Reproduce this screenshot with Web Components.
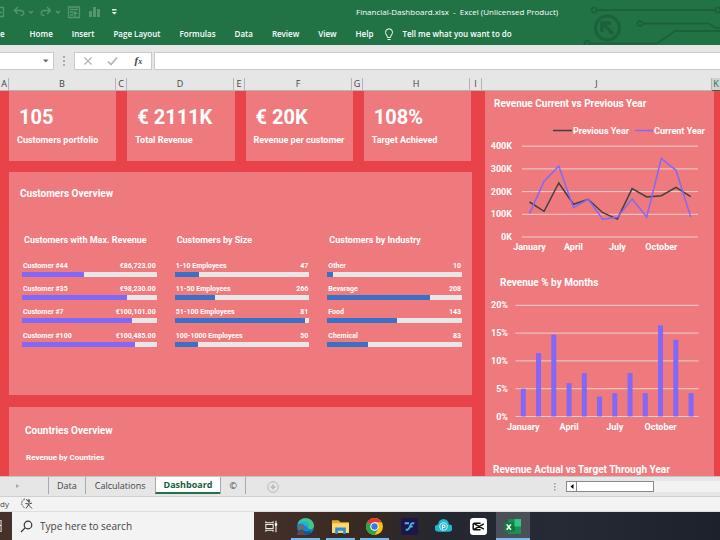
<!DOCTYPE html>
<html lang="en">
<head>
<meta charset="utf-8">
<meta name="viewport" content="width=device-width, initial-scale=1">
<title>Financial-Dashboard.xlsx - Excel</title>
<style>
  :root {
    --ui: "Open Sans", "Noto Sans", sans-serif;
    --dash: Roboto, "Liberation Sans", sans-serif;
    --green: #217346;
    --chrome: #e6e6e6;
    --red: #e84348;
    --pink: #ef7a7d;
    --violet: #8168f8;
    --blue: #3a70c6;
  }
  html, body { height: 100%; margin: 0; }
  body { display: flex; flex-direction: column; overflow: hidden; background: var(--chrome); font-family: var(--ui); }
</style>
</head>
<body>
<excel-header></excel-header>
<formula-bar></formula-bar>
<column-heads></column-heads>
<work-sheet>
  <kpi-card slot="kpi" value="105">Customers portfolio</kpi-card>
  <kpi-card slot="kpi" value="€ 2111K">Total Revenue</kpi-card>
  <kpi-card slot="kpi" value="€ 20K">Revenue per customer</kpi-card>
  <kpi-card slot="kpi" value="108%">Target Achieved</kpi-card>
  <meter-list slot="meters" heading="Customers with Max. Revenue" color="var(--violet)"
    rows="Customer #44|€86,723.00|46;Customer #35|€98,230.00|78;Customer #7|€100,101.00|82;Customer #100|€100,485.00|84"></meter-list>
  <meter-list slot="meters" heading="Customers by Size" color="var(--blue)"
    rows="1-10 Employees|47|18;11-50 Employees|266|30;51-100 Employees|81|97;100-1000 Employees|50|17"></meter-list>
  <meter-list slot="meters" heading="Customers by Industry" color="var(--blue)"
    rows="Other|10|4;Bevarage|208|76;Food|143|52;Chemical|83|30"></meter-list>
  <line-chart slot="line"></line-chart>
  <bar-chart slot="bars"></bar-chart>
</work-sheet>
<sheet-tabs></sheet-tabs>
<status-bar></status-bar>
<task-bar></task-bar>

<script>
const define = (name, html, setup) => customElements.define(name, class extends HTMLElement {
  constructor() {
    super();
    this.attachShadow({ mode: "open" });
  }
  connectedCallback() {
    this.shadowRoot.innerHTML = "<style>:host,*{box-sizing:border-box}button{font:inherit;color:inherit;background:none;border:0;padding:0;margin:0}svg{display:block}</style>" + html;
    if (setup) setup(this, this.shadowRoot);
  }
});

define("excel-header", `
<style>
  :host { display: block; position: relative; flex: none; background: var(--green); color: #fff; font-size: 8px; line-height: 12px; font-weight: 600; }
  .deco { position: absolute; right: 0; top: 0; }
  .title { display: flex; align-items: center; height: 24px; position: relative; font-weight: 500; }
  .quick { width: 356px; }
  .quick svg { width: 120px; height: 24px; }
  .title span { white-space: pre; }
  nav { display: flex; align-items: center; gap: 19px; height: 21px; padding-bottom: 1px; position: relative; }
  nav button { white-space: nowrap; }
  .file { margin-right: 6px; }
  .tell { display: flex; align-items: center; gap: 8px; margin-left: -8px; }
</style>
<svg class="deco" width="140" height="45" viewBox="580 0 140 45" fill="none" stroke="#1c613a" stroke-width="2" aria-hidden="true">
  <circle cx="607.500" cy="28" r="12" stroke-width="3"/>
  <path d="M613 34L603 24M602 32V23H611" stroke-width="3.500"/>
  <circle cx="594" cy="10" r="2.500"/><path d="M597 10H715"/><circle cx="718" cy="10" r="2.500"/>
  <circle cx="640" cy="23.500" r="2.500"/><path d="M643 23.500H708L716 28H720"/>
  <circle cx="587" cy="43.500" r="2.500"/><path d="M590 43.500H657L675 31H720"/>
</svg>
<div class="title">
  <div class="quick">
    <svg viewBox="0 0 120 24" fill="none" stroke="#55966f" stroke-width="1.300" aria-hidden="true">
      <path d="M0 7.500H3.500V16.500H0M0 12.500H2"/>
      <path d="M18 7L14.500 10.500L18 14M15 10.500H20C25 10.500 25 15.500 20.500 15.500"/>
      <path d="M29 11L31 13L33 11"/>
      <path d="M47 7L50.500 10.500L47 14M50 10.500H45C40 10.500 40 15.500 44.500 15.500"/>
      <path d="M56 11L58 13L60 11"/>
      <path d="M68.500 7H79.500V17.500H68.500ZM70 9.500H78M70 12H73M70 15H73M75 17V12L73 14M75 12L77.500 14"/>
      <g fill="#55966f" stroke="none"><rect x="89" y="11" width="3" height="6"/><rect x="93" y="7" width="3" height="10"/><rect x="97" y="9" width="3" height="8"/></g>
      <path d="M112 9.800H116.500" stroke="#fff"/><path d="M111.800 12H116.800L114.300 14.500Z" fill="#fff" stroke="none"/>
    </svg>
  </div>
  <span>Financial-Dashboard.xlsx  -  Excel (Unlicensed Product)</span>
</div>
<nav>
  <button class="file" aria-label="File">e</button><button>Home</button><button>Insert</button><button>Page Layout</button><button>Formulas</button><button>Data</button><button>Review</button><button>View</button><button>Help</button>
  <button class="tell"><svg width="10" height="13" viewBox="0 0 10 13" fill="none" stroke="#fff" aria-hidden="true"><path d="M3.500 9.500C3.500 7.500 1.500 6.500 1.500 4.300A3.500 3.500 0 0 1 8.500 4.300C8.500 6.500 6.500 7.500 6.500 9.500ZM3.500 11.500H6.500"/></svg>Tell me what you want to do</button>
</nav>`);

define("formula-bar", `
<style>
  :host { display: flex; flex: none; height: 33px; padding: 7px 0 8px; background: var(--chrome); }
  label { display: flex; background: #fff; border: 1px solid #cacaca; border-left: 0; width: 54px; align-items: center; }
  input { width: 100%; min-width: 0; border: 0; padding: 0 4px; background: none; font: 9px var(--ui); outline: 0; }
  .name svg { flex: none; width: 14px; height: 8px; }
  .grip { width: 20px; display: grid; place-items: center; }
  .fx { display: flex; width: 78px; background: #fff; border: 1px solid #cacaca; margin-right: 2px; }
  .fx button { flex: 1; display: flex; align-items: center; justify-content: center; }
  .fx .f { font: italic 700 11px/14px "Liberation Serif", serif; color: #444; }
  .fx .f i { font-size: 8px; }
  .formula { flex: 1; border: 1px solid #cacaca; border-right: 0; }
</style>
<label class="name"><input aria-label="Name box"><svg viewBox="0 0 14 8" aria-hidden="true"><path d="M4 2.500H9.500L6.750 5.500Z" fill="#666"/></svg></label>
<div class="grip"><svg width="2" height="10" viewBox="0 0 2 10" fill="#aaa" aria-hidden="true"><path d="M0 0H2V2H0ZM0 4H2V6H0ZM0 8H2V10H0Z"/></svg></div>
<div class="fx">
  <button aria-label="Cancel"><svg width="10" height="10" viewBox="0 0 10 10" stroke="#b5b5b5" stroke-width="1.300"><path d="M1.500 1.500L8.500 8.500M8.500 1.500L1.500 8.500"/></svg></button>
  <button aria-label="Enter"><svg width="11" height="10" viewBox="0 0 11 10" fill="none" stroke="#b5b5b5" stroke-width="1.700"><path d="M1 5.500L4 8.500L10 1.500"/></svg></button>
  <button class="f" aria-label="Insert function"><span>f<i>x</i></span></button>
</div>
<label class="formula"><input aria-label="Formula"></label>`);

define("column-heads", `
<style>
  :host { display: grid; grid-template-columns: 9px 107fr 11px 107fr 11px 107fr 11px 107fr 12px 230fr 8px; flex: none; height: 13px; background: var(--chrome); border-bottom: 1px solid #b4b4b4; color: #444; font: 9px/12px var(--ui); }
  span { border-right: 1px solid #b4b4b4; text-align: center; }
  span:first-child { text-align: left; }
  span:last-child { border: 0; background: #d2d2d2; color: var(--green); box-shadow: 0 1px var(--green); }
</style>` + [..."ABCDEFGHIJK"].map(c => `<span>${c}</span>`).join(""));

define("work-sheet", `
<style>
  :host { display: grid; grid-template-columns: 463fr 229fr; gap: 13px; flex: 1; min-height: 0; overflow: hidden; padding: 0 6px 0 9px; background: var(--red); color: #fff; font-family: var(--dash); font-weight: 700; }
  .left { display: flex; flex-direction: column; min-width: 0; }
  .kpis { display: grid; grid-template-columns: repeat(4, 1fr); gap: 11px; padding-right: 1px; margin-bottom: 11px; height: 70px; flex: none; }
  section { background: var(--pink); }
  h2 { margin: 0; font-size: 10px; line-height: 14px; }
  h3 { margin: 0; font-size: 8px; line-height: 12px; }
  .customers { height: 223px; flex: none; padding: 15px 10px 0 11px; margin-bottom: 12px; }
  .meters { display: grid; grid-template-columns: repeat(3, 1fr); gap: 18px; margin-top: 33px; padding-left: 2px; }
  .countries { flex: 1; padding: 17px 16px 0; }
  .countries h3 { margin: 14px 0 0 1px; }
  .right { min-width: 0; padding-top: 6px; }
  .right h2 { padding-left: 9px; white-space: nowrap; }
  .right line-chart, .right slot { display: block; }
  .right slot[name="line"] { margin-top: -1px; }
  .right .months { padding-left: 15px; margin-top: 19px; }
  .right slot[name="bars"] { margin-top: -1px; }
  .right .actual { margin-top: 28px; padding-left: 8px; line-height: 12px; }
</style>
<div class="left">
  <div class="kpis"><slot name="kpi"></slot></div>
  <section class="customers"><h2>Customers Overview</h2><div class="meters"><slot name="meters"></slot></div></section>
  <section class="countries"><h2>Countries Overview</h2><h3>Revenue by Countries</h3></section>
</div>
<section class="right">
  <h2>Revenue Current vs Previous Year</h2>
  <slot name="line"></slot>
  <h2 class="months">Revenue % by Months</h2>
  <slot name="bars"></slot>
  <h2 class="actual">Revenue Actual vs Target Through Year</h2>
</section>`);

define("kpi-card", `
<style>
  :host { display: block; background: var(--pink); padding: 13px 0 0 8px; min-width: 0; white-space: nowrap; }
  strong { display: block; padding-left: 2px; font: 700 20px/26px var(--dash); }
  span { display: block; margin-top: 4px; font-size: 9px; line-height: 12px; }
</style>
<strong></strong><span><slot></slot></span>`, (el, root) => {
  root.querySelector("strong").textContent = el.getAttribute("value");
});

define("meter-list", `
<style>
  :host { display: block; min-width: 0; }
  h3 { margin: 0 0 16px; padding-left: 2px; font-size: 9px; line-height: 12px; white-space: nowrap; }
  .row { padding-bottom: 8px; }
  .row:nth-of-type(3) { padding-bottom: 9px; }
  .text { display: flex; justify-content: space-between; padding: 0 1px; font-size: 7px; line-height: 9px; margin-bottom: 1px; }
  .track { height: 5px; background: #e8e6e6; }
  .fill { height: 5px; }
</style><h3></h3>`, (el, root) => {
  root.querySelector("h3").textContent = el.getAttribute("heading");
  for (const item of el.getAttribute("rows").split(";")) {
    const [label, value, pct] = item.split("|");
    root.innerHTML += `<div class="row"><div class="text"><span>${label}</span><span>${value}</span></div><div class="track"><div class="fill" style="width:${pct}%;background:${el.getAttribute("color")}"></div></div></div>`;
  }
});

const text = (x, y, s, anchor) => `<text x="${x}" y="${y}" text-anchor="${anchor}">${s}</text>`;
const chartStyle = `<style>:host{display:block} svg{width:100%;height:auto} text{font:700 9px var(--dash);fill:#fff}</style>`;

define("line-chart", chartStyle, (el, root) => {
  const prev = [154, 113, 238, 144, 166, 107, 79, 213, 176, 182, 219, 178];
  const cur = [103, 246, 312, 129, 166, 78, 87, 168, 88, 346, 294, 88];
  const px = i => 44.5 + i * 14.65, py = v => 127 - v * 0.227;
  const line = (d, c) => `<polyline points="${d.map((v, i) => px(i).toFixed(1) + "," + py(v).toFixed(1)).join(" ")}" fill="none" stroke="${c}" stroke-width="1.500"/>`;
  let g = "";
  for (let v = 0; v <= 400; v += 100) g += `<path d="M37 ${py(v)}H213" stroke="#ead2d2"/>` + text(27, py(v) + 3, v + "K", "end");
  ["January", "April", "July", "October"].forEach((m, i) => g += text(px(i * 3), 140, m, "middle"));
  root.innerHTML += `<svg viewBox="0 0 229 147" role="img" aria-label="Revenue current vs previous year">${g}
    <path d="M68 20.500H87" stroke="#404040" stroke-width="1.500"/>${text(88, 24, "Previous Year", "start")}
    <path d="M150 20.500H168" stroke="#8168f8" stroke-width="1.500"/>${text(169, 24, "Current Year", "start")}
    ${line(prev, "#404040")}${line(cur, "#8168f8")}</svg>`;
});

define("bar-chart", chartStyle, (el, root) => {
  const data = [5, 11.4, 14.7, 6, 7.8, 3.6, 4.2, 7.8, 4.2, 16.4, 13.8, 4.2];
  const px = i => 38.3 + i * 15.25, py = v => 127.5 - v * 5.56;
  let g = "";
  for (let v = 0; v <= 20; v += 5) g += `<path d="M30.500 ${py(v)}H213.500" stroke="#ead2d2"/>` + text(23, py(v) + 3, v + "%", "end");
  data.forEach((v, i) => g += `<rect x="${px(i) - 2.5}" y="${py(v)}" width="5" height="${v * 5.56}" fill="#8168f8"/>`);
  ["January", "April", "July", "October"].forEach((m, i) => g += text(px(i * 3), 141, m, "middle"));
  root.innerHTML += `<svg viewBox="0 0 229 147" role="img" aria-label="Revenue percent by months">${g}</svg>`;
});

define("sheet-tabs", `
<style>
  :host { display: flex; flex: none; height: 21px; background: var(--chrome); border-top: 1px solid #c4c4c4; border-bottom: 1px solid #cfcfcf; font-size: 9px; color: #444; }
  .arrow { width: 49px; display: grid; place-items: center; padding-right: 12px; border-right: 1px solid #aaa; }
  .tabs { display: flex; }
  .tabs > button { padding: 0 8px; }
  .tabs > button + button { border-left: 1px solid #aaa; }
  .tabs > .calc { padding: 0 9px; }
  .tabs > .on { background: #fff; color: #17603a; font-weight: 700; border-bottom: 2px solid var(--green); }
  .tabs > .copy { border-right: 1px solid #aaa; }
  .arrow, .tabs { margin-bottom: 2px; }
  .add { margin-left: 21px; }
  .scroll { display: flex; align-items: center; margin-left: auto; width: 167px; }
  .dots { width: 13px; }
  .prev { width: 11px; height: 11px; display: grid; place-items: center; background: #fff; border: 1px solid #888; }
  .track { flex: 1; height: 11px; background: #f2f2f2; }
  .thumb { width: 77px; height: 11px; background: #fff; border: 1px solid #888; border-left: 0; }
</style>
<div class="arrow"><svg width="4" height="6" viewBox="0 0 4 6"><path d="M0 1L3.500 3L0 5Z" fill="#aaa"/></svg></div>
<div class="tabs"><button>Data</button><button class="calc">Calculations</button><button class="on">Dashboard</button><button class="copy">©</button></div>
<button class="add" aria-label="New sheet"><svg width="12" height="12" viewBox="0 0 12 12" fill="none" stroke="#b8b8b8"><circle cx="6" cy="6" r="5.300"/><path d="M3.500 6H8.500M6 3.500V8.500" stroke-width="1.500"/></svg></button>
<div class="scroll"><svg class="dots" width="13" height="8" viewBox="0 0 13 8" fill="#999"><path d="M1 0H2.500V1.500H1ZM1 3H2.500V4.500H1ZM1 6H2.500V7.500H1Z"/></svg>
<button class="prev" aria-label="Scroll left"><svg width="4" height="5" viewBox="0 0 4 5"><path d="M3.500 0V5L0.500 2.500Z" fill="#000"/></svg></button><div class="track"><div class="thumb"></div></div></div>`);

define("status-bar", `
<style>
  :host { display: flex; align-items: center; gap: 12px; flex: none; height: 15px; background: #f3f3f3; color: #444; font: 8px/12px var(--ui); border-bottom: 1px solid #ddd; }
</style>
<span>dy</span>
<svg width="12" height="12" viewBox="0 0 12 12" fill="none" stroke="#444" aria-hidden="true"><path d="M4 1A4.500 4.500 0 0 0 3.500 9.500" stroke-dasharray="2 1"/><path d="M5 1.500L8 3V1M4.500 5.500L8 6L11 5M8 6L5 10.500M7.500 7L11 10.500"/><circle cx="8" cy="3.500" r="0.800"/></svg>`);

const apps = {
  "Task View": `<path d="M1 1.500V3.500H10V1.500M1 14.500V12.500H10V14.500M1 5.500H10V10.500H1ZM13.500 1V15" fill="none" stroke="#eee" stroke-width="1.300"/><rect x="12" y="4" width="3" height="3" fill="#fff"/>`,
  "Edge": `<circle cx="8" cy="8" r="8" fill="#1683cc"/><path d="M0.500 6C2-2 15-2 16 7C16 12 9 11 10 8C10 5 4 3 .5 6Z" fill="#42c885"/><path d="M1 6C5 1 11 3 12 7L8 8C6 5 3 5 1 6Z" fill="#26add8"/><path d="M5 7C3 12 9 14 14 12C11 17 4 17 2 12Z" fill="#164f96"/><circle cx="4" cy="9" r="2.300" fill="#87614c"/><path d="M0 16C0 11 7 10 7.500 16Z" fill="#624a43"/>`,
  "File Explorer": `<path d="M0 2H6L8 4H16V14H0Z" fill="#e8a928"/><path d="M0 5H16V14H0Z" fill="#ffd76b"/><path d="M3 9H13V15H10.500V12H5.500V15H3Z" fill="#288fdd"/>`,
  "Chrome": `<circle cx="8" cy="8" r="8" fill="#fbc116"/><path d="M8 8L1.100 4A8 8 0 0 1 14.900 4H8Z" fill="#e33b2e"/><path d="M8 8L1.100 4A8 8 0 0 0 8 16L11.500 10Z" fill="#2ba24c"/><circle cx="8" cy="8" r="4" fill="#fff"/><circle cx="8" cy="8" r="3" fill="#3779e4"/>`,
  "Flow": `<rect width="16" height="16" rx="1" fill="#1c1748"/><path d="M3.500 5H7.500M12.500 5H10.500C8.500 5 8.500 11 6 11H4.500M8.500 8H11" fill="none" stroke="#42b8ed" stroke-width="1.800"/>`,
  "Cloud": `<path d="M3.500 13A3.500 3.500 0 0 1 3 6A5 5 0 0 1 13 6A3.500 3.500 0 0 1 13 13Z" fill="#22b6cc"/><circle cx="8" cy="8" r="3.500" fill="none" stroke="#b9f0f8"/><path d="M7 10.500V6.500H8.300A1.200 1.200 0 0 1 8.300 8.900H7" fill="none" stroke="#fff"/>`,
  "CapCut": `<rect width="16" height="16" rx="3" fill="#fff"/><path d="M13 5.500L5 10Q3 11.500 3 10V6Q3 4.500 5 6L13 10.500M3.500 5H10M3.500 11H10" fill="none" stroke="#111" stroke-width="1.400"/>`,
  "Excel": `<path d="M4 1H16V15H4Z" fill="#1b8f54"/><path d="M10 1H16V8H10Z" fill="#35c481"/><path d="M4 8H10V12H4Z" fill="#185c37"/><rect y="4" width="9" height="9" fill="#107c41"/><path d="M2.500 6L6.500 11M6.500 6L2.500 11" stroke="#fff" stroke-width="1.400"/>`
};
define("task-bar", `
<style>
  :host { display: flex; flex: none; height: 28px; background: linear-gradient(90deg, #46302a 0 35%, #382923 50%, #242730 62%, #252a35 78%, #1d212b); }
  .start { width: 12px; display: grid; align-items: center; }
  label { display: flex; align-items: center; gap: 7px; width: 242px; padding: 0 8px; background: #f3f3f3; }
  input { flex: 1; min-width: 0; border: 0; padding: 0; outline: 0; background: none; color: #444; font: 10px/14px var(--ui); }
  input::placeholder { color: #444; opacity: 1; }
  .apps { display: flex; width: 276px; }
  .apps button { flex: 1; display: grid; place-items: center; }
  .apps svg { width: 17px; height: 17px; }
  .apps button:first-child svg { width: 13px; height: 13px; }
  .apps .open { background: linear-gradient(#76b9ed, #76b9ed) center bottom / 29px 2px no-repeat; }
  .apps .active { background: linear-gradient(#76b9ed, #76b9ed) center bottom / 100% 2px no-repeat #4b4f57; }
</style>
<div class="start"><svg width="3" height="12" viewBox="0 0 3 12"><path d="M0 0H1V12H0M0 5.500H1" stroke="#fff"/></svg></div>
<label><svg width="13" height="13" viewBox="0 0 13 13" fill="none" stroke="#333" stroke-width="1.200" aria-hidden="true"><circle cx="8" cy="5" r="3.800"/><path d="M5.300 7.700L1 12"/></svg><input type="search" aria-label="Search" placeholder="Type here to search"></label>
<div class="apps">${Object.entries(apps).map(([n, s]) => `<button aria-label="${n}" class="${/Edge|File|Chrome/.test(n) ? "open" : n === "Excel" ? "active" : ""}"><svg viewBox="0 0 16 16">${s}</svg></button>`).join("")}</div>`);
</script>
</body>
</html>
